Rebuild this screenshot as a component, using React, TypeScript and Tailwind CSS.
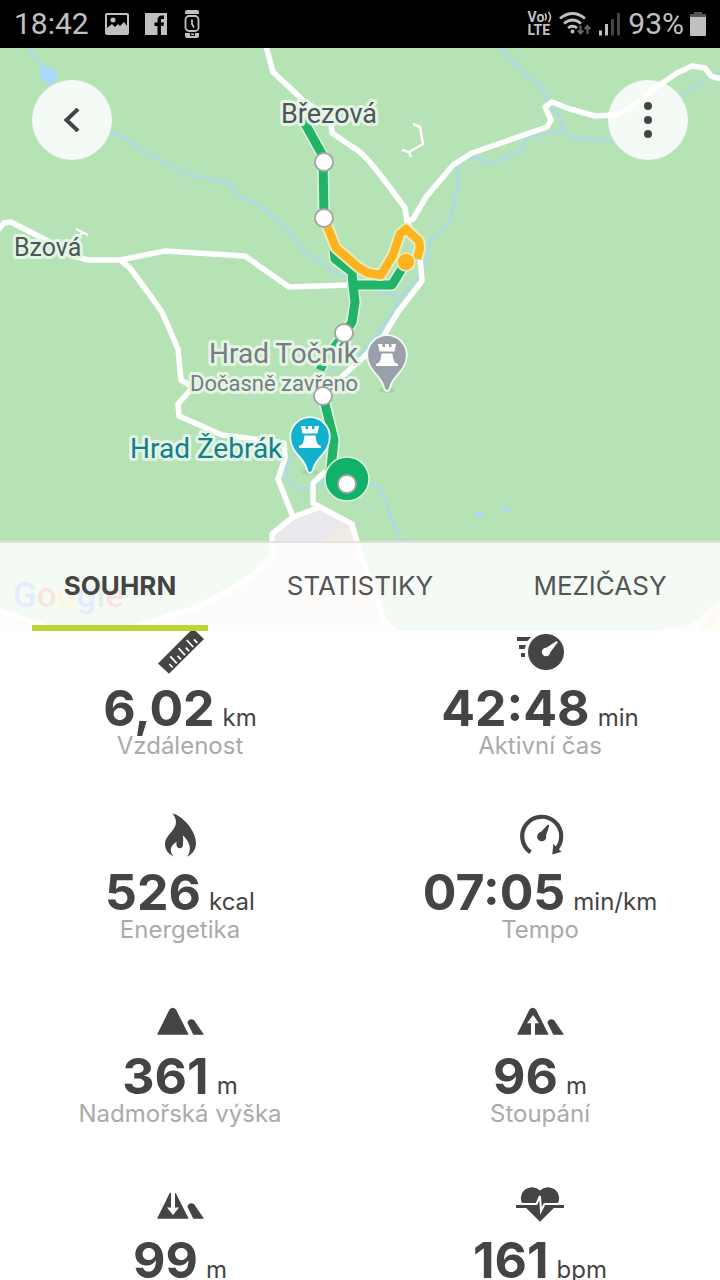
import { useState } from 'react';
import type { ReactNode } from 'react';
import clsx from 'clsx';

const TABS = ['SOUHRN', 'STATISTIKY', 'MEZIČASY'];

type Stat = { icon: ReactNode; value: string; unit: string; label?: string };

const STATS: Stat[] = [
  { icon: <RulerIcon />, value: '6,02', unit: 'km', label: 'Vzdálenost' },
  { icon: <FastTimeIcon />, value: '42:48', unit: 'min', label: 'Aktivní čas' },
  { icon: <FlameIcon />, value: '526', unit: 'kcal', label: 'Energetika' },
  { icon: <PaceIcon />, value: '07:05', unit: 'min/km', label: 'Tempo' },
  { icon: <MountainIcon />, value: '361', unit: 'm', label: 'Nadmořská výška' },
  { icon: <MountainIcon arrow="up" />, value: '96', unit: 'm', label: 'Stoupání' },
  { icon: <MountainIcon arrow="down" />, value: '99', unit: 'm' },
  { icon: <HeartIcon />, value: '161', unit: 'bpm' },
];

export default function App() {
  const [tab, setTab] = useState(TABS[0]);

  return (
    <div className="flex h-screen flex-col overflow-hidden bg-white font-['Inter','Liberation_Sans',sans-serif] text-[#444]">
      <StatusBar />

      <section className="relative h-[583px] shrink-0 overflow-hidden bg-[#b5e3b5]">
        <RouteMap />
        <div className="absolute inset-x-8 top-8 flex justify-between">
          <button aria-label="Zpět" className="flex size-20 cursor-pointer items-center justify-center rounded-full bg-white/85">
            <svg viewBox="0 0 24 24" className="size-6" fill="none" stroke="currentColor" strokeWidth="4">
              <path d="M18 1 6.500 12 18 23" />
            </svg>
          </button>
          <button aria-label="Další možnosti" className="flex size-20 cursor-pointer items-center justify-center rounded-full bg-white/85">
            <svg viewBox="0 0 36 36" className="size-9" fill="currentColor">
              <circle cx="18" cy="4" r="4" />
              <circle cx="18" cy="18" r="4" />
              <circle cx="18" cy="32" r="4" />
            </svg>
          </button>
        </div>

        <nav className="absolute inset-x-0 bottom-0 grid h-[90px] grid-cols-3 border-t-2 border-black/10 bg-white/85">
          {TABS.map((name) => (
            <button
              key={name}
              onClick={() => setTab(name)}
              className={clsx(
                'mx-8 cursor-pointer border-b-6 pt-1 text-[26px] leading-8',
                tab === name ? 'border-[#bdd534] font-bold text-[#444]' : 'border-transparent text-[#555]'
              )}
            >
              {name}
            </button>
          ))}
        </nav>
      </section>

      {/* Summary, scrolled slightly under the tabs */}
      <main className="min-h-0 flex-1 overflow-hidden">
        <div className="-mt-[3px] grid grid-cols-2 gap-y-13">
          {STATS.map((s, i) => (
            <StatCell key={i} {...s} />
          ))}
        </div>
      </main>
    </div>
  );
}

function StatCell({ icon, value, unit, label }: Stat) {
  return (
    <div className="flex flex-col items-center">
      {icon}
      <div className="mt-2 flex items-baseline gap-2">
        <span className="text-[50px] leading-[48px] font-bold">{value}</span>
        <span className="text-[24px] leading-7">{unit}</span>
      </div>
      {label && <div className="text-[24px] leading-7 text-[#aaa]">{label}</div>}
    </div>
  );
}

function StatusBar() {
  return (
    <header className="flex h-12 shrink-0 items-center justify-between bg-black pr-3 pl-[14px] font-['Roboto','Noto_Sans',sans-serif] text-[30px] leading-9 text-[#c0c0c0]">
      <div className="flex items-center gap-4">
        <span>18:42</span>
        <svg viewBox="0 0 24 24" className="size-6" fill="none" stroke="currentColor" strokeWidth="2">
          <rect x="1" y="2" width="22" height="20" rx="1" />
          <circle cx="8" cy="8" r="2.500" fill="currentColor" stroke="none" />
          <path d="M2 21v-5l5-4 3 3 3-3 2 2 4-4 3 4v7z" fill="currentColor" stroke="none" />
        </svg>
        <svg viewBox="0 0 22 22" className="size-[22px]">
          <path d="M0 0h22v22H0z" fill="currentColor" />
          <path d="M12.500 22v-9H9.500V9.500h3V7c0-3 1.700-4.500 4.200-4.500H19V6h-1.600c-1 0-1.400.5-1.400 1.400v2.100h3l-.5 3.500H16v9z" fill="#000" />
        </svg>
        <svg viewBox="0 0 20 28" className="h-7 w-5">
          <path d="M4 0h10a2 2 0 0 1 2 2v2H2V2a2 2 0 0 1 2-2zM2 23h14v3a2 2 0 0 1-2 2H4a2 2 0 0 1-2-2z" fill="currentColor" />
          <rect x="2.500" y="6" width="13" height="15" rx="3.500" fill="none" stroke="currentColor" strokeWidth="1.800" />
          <path d="M9 9.500V14l2 3.500" fill="none" stroke="currentColor" strokeWidth="1.800" />
          <path d="M7.500 23h4v2.500h-4z" fill="currentColor" stroke="#000" strokeWidth="1" />
        </svg>
      </div>
      <div className="flex items-center gap-1.5">
        <div className="flex flex-col text-[14px] leading-[13px] font-bold">
          <span className="flex">
            Vo
            <svg viewBox="0 0 8 12" className="h-3 w-2" fill="none" stroke="currentColor" strokeWidth="1.600">
              <path d="M1 2.500q2.500 3.500 0 7M4.500 1q4 5 0 10" />
            </svg>
          </span>
          <span>LTE</span>
        </div>
        <svg viewBox="0 0 34 24" className="h-6 w-[34px]" fill="none" stroke="currentColor" strokeWidth="2.800">
          <path d="M2 6.500Q14.500-3.500 27 6.500M6 11.500q8.500-7 17 0M10 16q4.500-3.500 9 0" />
          <circle cx="14.500" cy="19.500" r="1.900" fill="currentColor" stroke="none" />
          <path d="M22.500 13.500v8m-2.800-3 2.800 3 2.800-3M29.500 22v-8m-2.800 3 2.800-3 2.800 3" stroke="#666" strokeWidth="2" />
        </svg>
        <svg viewBox="0 0 24 24" className="size-6">
          <path d="M1 18.500h3v5H1zM7 12h3v11.500H7z" fill="currentColor" />
          <path d="M13 7h3v16.500h-3zM19 1h3v22.500h-3z" fill="#444" />
        </svg>
        <span>93%</span>
        <svg viewBox="0 0 18 24" className="h-6 w-[18px]">
          <path d="M4 0h8v2h4v4H0V2h4z" fill="#555" />
          <path d="M0 5h16v18a1 1 0 0 1-1 1H1a1 1 0 0 1-1-1z" fill="currentColor" />
        </svg>
      </div>
    </header>
  );
}

const WAYPOINTS = [
  [324, 162],
  [324, 218],
  [344, 333],
  [323, 396],
  [347, 484],
];

const GREEN_ROUTE =
  'M303 120 323 156 324 218M334 250 335 259 352 272 353 286M406 262 392 285 353 285 355 302 352 322 344 335 325 359 320 370M323 396 334 440 331 468';
const ORANGE_ROUTE = 'M324 218 336 248 358 267 368 273 381 275 393 255 400 234 406 229 419 241 420 248 417 259';

function RouteMap() {
  return (
    <svg
      viewBox="0 48 720 583"
      preserveAspectRatio="xMidYMid slice"
      className="block h-full w-full font-['Roboto','Noto_Sans',sans-serif]"
      fill="none"
      strokeLinejoin="round"
    >
      <rect y="48" width="720" height="583" fill="#b5e3b5" />

      {/* Built-up area */}
      <path d="M320 509 352 524 360 545 366 565 385 622 395 631H120L197 608 247 580 273 558V535L293 517z" fill="#ebe9ed" />
      <path d="M353 527 334 530 322 542 273 556 247 580 197 608 120 631H395L385 622 366 565z" fill="#f0ece4" />
      <path d="M0 612 60 631H0zM650 631 690 625 720 600V631z" fill="#f3efe9" />
      <path d="M704 631 720 610" stroke="#fbe0a0" strokeWidth="9" />

      {/* Water */}
      <path d="M40 68 48 65 59 76 50 86 41 79zM475 512 485 513 478 518zM502 505 512 509 505 513z" fill="#a9d8fb" />
      <g stroke="#aedae6" strokeWidth="3">
        <path d="M28 48 43 68M55 84 68 112 108 132 119 134 140 149 188 175 227 182 237 195 260 206 287 229 303 250 335 273 350 278" />
        <path d="M500 48 528 78 541 85 547 101 560 118 563 131 570 138 615 141 640 124 680 96 705 80 720 72M563 131 526 137 521 150 492 163 472 157 458 164 457 190 451 218 443 232 431 239 425 268 402 297 375 291M410 285 382 328 360 355 323 373" />
        <path d="M297 452Q287 462 286 472 288 488 302 489L325 485M368 485 380 487 392 520 402 545 407 565 420 590 440 631M206 445Q218 434 236 450" />
      </g>

      {/* Roads */}
      <g stroke="#fff" strokeWidth="5.500">
        <path d="M266 46 273 72 304 101 330 118 332 133 360 152 368 160 382 177 405 208 407 222 413 219 426 197 453 165 472 153 547 127 551 120 545 107 552 102 570 109 595 116 616 115 630 108 655 88 677 73 692 66 705 68 711 76 721 79" />
        <path d="M407 222 419 245 422 281 398 312 383 337 364 357 338 380 325 396" />
        <path d="M-2 230 4 223 11 222 48 241 70 255 88 260 120 260 165 251 245 256 289 287 350 285M120 260 130 268 152 298 162 312 178 349 181 380 193 387 178 404 179 416 222 435 262 440 284 443 285 458 278 479 293 517" />
        <path d="M326 471 313 483 313 503 320 507 352 524 358 545 366 570 385 622 397 633M320 507 293 517 272 534V558L247 580 197 608 140 625 118 633M-2 611 60 631" />
      </g>
      <path d="M413 124 420 127 423 144 409 152 402 150M409 152 411 157M76 229 88 235M82 233 74 242" stroke="#fff" strokeWidth="2.500" />

      {/* Recorded route */}
      <g strokeLinecap="butt">
        <path d={GREEN_ROUTE} stroke="#dff3df" strokeWidth="12" />
        <path d={GREEN_ROUTE} stroke="#1fb467" strokeWidth="9" />
        <path d={ORANGE_ROUTE} stroke="#e6f0c4" strokeWidth="12" />
        <path d={ORANGE_ROUTE} stroke="#ffb41f" strokeWidth="8.500" />
      </g>
      <circle cx="406" cy="262" r="9" fill="#ffb41f" stroke="#e6f0c4" strokeWidth="1.500" />
      <circle cx="347" cy="479" r="22" fill="#10b168" stroke="#dff3df" strokeWidth="1.500" />

      <g stroke="#e4f5e4" strokeWidth="6" style={{ paintOrder: 'stroke' }}>
        <text x="281" y="123" fontSize="27" fill="#4d555b">Březová</text>
        <text x="14" y="256" fontSize="25" fill="#4d555b">Bzová</text>
        <text x="209" y="363" fontSize="28" fill="#767c82">Hrad Točník</text>
        <text x="190" y="391" fontSize="22" fill="#767c82">Dočasně zavřeno</text>
        <text x="130" y="458" fontSize="28" fill="#12808c">Hrad Žebrák</text>
      </g>

      <CastlePin x={387} y={355} color="#9a9fa9" />
      <CastlePin x={310} y={437} color="#12b2cf" />

      {WAYPOINTS.map(([x, y]) => (
        <circle key={`${x}-${y}`} cx={x} cy={y} r="9" fill="#fff" stroke="#a3a3a3" strokeWidth="1.800" />
      ))}

      <text x="13" y="607" fontSize="35" fontWeight="500">
        <tspan fill="#4285f4">G</tspan>
        <tspan fill="#ea4335">o</tspan>
        <tspan fill="#fbbc05">o</tspan>
        <tspan fill="#4285f4">g</tspan>
        <tspan fill="#34a853">l</tspan>
        <tspan fill="#ea4335">e</tspan>
      </text>
    </svg>
  );
}

function CastlePin({ x, y, color }: { x: number; y: number; color: string }) {
  return (
    <g transform={`translate(${x} ${y})`}>
      <ellipse cy="35" rx="8" ry="3" fill="#a5d3a5" />
      <path
        d="M0 36C-2.500 36-2.800 34-3.500 31-6 21-19.800 15-19.800 0a19.800 19.800 0 0 1 39.600 0C19.800 15 6 21 3.500 31 2.800 34 2.500 36 0 36z"
        fill={color}
        stroke="#f3faf3"
        strokeWidth="1.800"
      />
      <path d="M-9-11h4.500v3h2.500v-3h4v3h2.500v-3H9L7.500-3.500h-15zM-5.500-1.500h11Q6 5 8 7.500l3 1.500v2h-22V9l3-1.500Q-6 5-5.500-1.500z" fill="#fff" />
    </g>
  );
}

function RulerIcon() {
  const ticks = [0, 1, 2, 3, 4, 5, 6];
  return (
    <svg viewBox="0 0 48 48" className="size-12">
      <path d="M13 45.700 2 35.500 37 .5 48 11z" fill="currentColor" />
      <path
        d={ticks.map((i) => `M${16.7 + 4.1 * i} ${39.500 - 4.1 * i}l${i % 2 ? '-6.500-7' : '-3.300-3.500'}`).join('')}
        stroke="#fff"
        strokeWidth="1.800"
      />
    </svg>
  );
}

function FastTimeIcon() {
  return (
    <svg viewBox="0 0 48 48" className="size-12">
      <path d="M1 9h14l-3.500 4H1zM3 17h7l-1.500 4H3zM5 25h4v4H5z" fill="currentColor" />
      <circle cx="30" cy="24" r="18" fill="currentColor" />
      <circle cx="30" cy="24" r="4.200" fill="#fff" />
      <path d="M28.500 21 39.800 13.600a1 1 0 0 1 1.500 1.500L33 26z" fill="#fff" />
    </svg>
  );
}

function FlameIcon() {
  return (
    <svg viewBox="0 0 48 48" className="size-12" fill="currentColor">
      <path d="M16.300 1.300C27 4 40 19 40 31c0 7-4 11.500-9.300 13.700C35.500 40 35.500 31 26.700 23.300c1 4 .3 6 .3 10a3.300 3.700 0 0 1-6.500 0c-.2-1.500-.2-2.500.2-3.600C13.500 34 13 40 18.300 44.700 12 42 9 37.500 9 32 9 23 20 19 20 10c0-3-1.500-6-3.700-8.700z" />
    </svg>
  );
}

function PaceIcon() {
  return (
    <svg viewBox="0 0 48 48" className="size-12">
      <path d="M14.500 40.200A19.500 19.500 0 1 1 39 38.500" fill="none" stroke="currentColor" strokeWidth="4.200" />
      <path d="M36.300 42.600 37.300 32 45.500 39.700z" fill="currentColor" />
      <circle cx="25.700" cy="24.700" r="4.600" fill="currentColor" />
      <path d="M23.500 21.500 31.300 13.300a1 1 0 0 1 1.800 1L29.500 25z" fill="currentColor" />
    </svg>
  );
}

function MountainIcon({ arrow }: { arrow?: 'up' | 'down' }) {
  return (
    <svg viewBox="0 0 48 48" className="size-12" fill="currentColor">
      <path d="M1 38.700 13.500 13.500Q16.700 10 20 13.500L32.700 38.700z" />
      <path d="M37.300 38.700 31.300 26.500Q33.500 21.500 38 24L48 38.700z" />
      {arrow === 'up' && <path d="M15 39V27.300h-4l6-8.300 6 8.300h-4V39z" fill="#fff" />}
      {arrow === 'down' && <path d="M15 10V27.500h-4l6 7.500 6-7.500h-4V10z" fill="#fff" />}
    </svg>
  );
}

function HeartIcon() {
  return (
    <svg viewBox="0 0 48 48" className="size-12">
      <path d="M24 41.700 7 25A11.200 11.200 0 0 1 24 10.500 11.200 11.200 0 0 1 41 25z" fill="currentColor" />
      <path d="M0 25h48v3H0z" fill="currentColor" />
      <path d="M0 24H20.500L24 16 25 31 28.500 24H48" fill="none" stroke="#fff" strokeWidth="2" />
    </svg>
  );
}
